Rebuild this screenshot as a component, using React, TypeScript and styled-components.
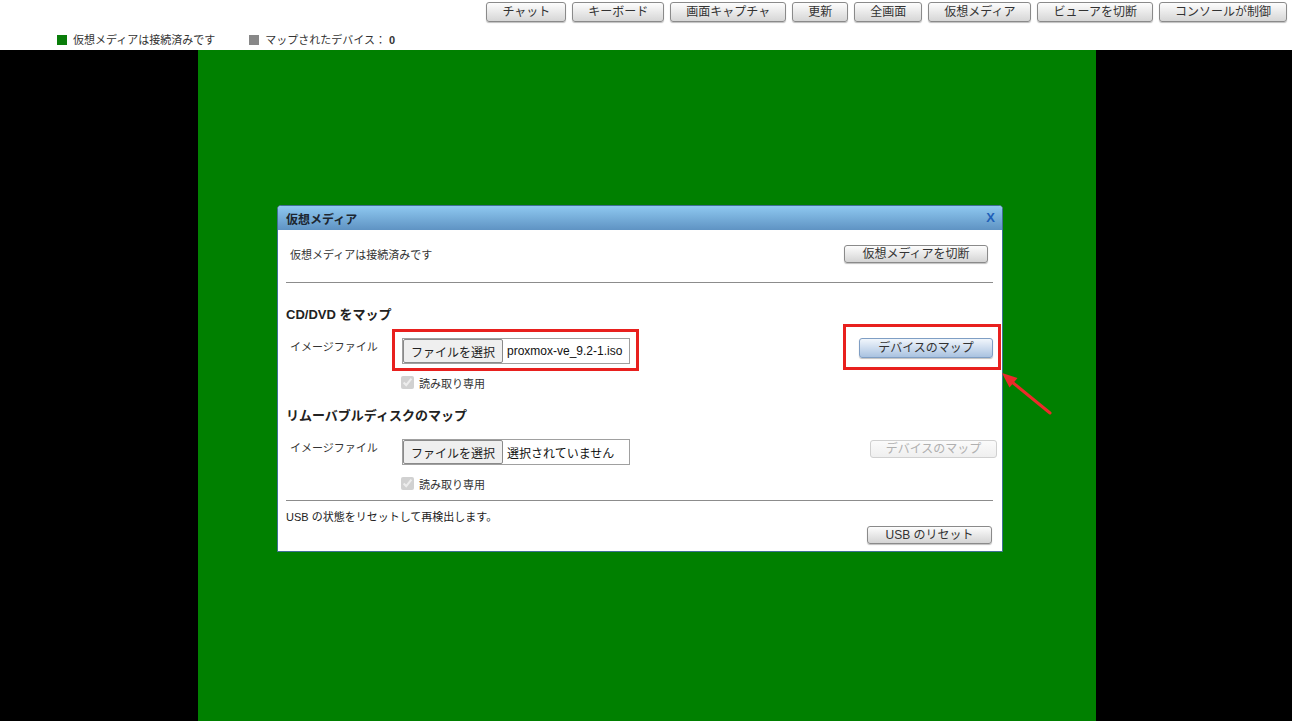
import styled, { createGlobalStyle } from "styled-components";

const GlobalStyle = createGlobalStyle`
  html, body, #root {
    margin: 0;
    padding: 0;
    height: 100%;
  }
  body {
    font-family: "Liberation Sans", "Noto Sans CJK JP", sans-serif;
    color: #333;
    background: #000;
  }
`;

const toolbarItems = [
  "チャット",
  "キーボード",
  "画面キャプチャ",
  "更新",
  "全画面",
  "仮想メディア",
  "ビューアを切断",
  "コンソールが制御",
];

const App = () => {
  return (
    <>
      <GlobalStyle />
      <Page>
        <TopBar>
          <Toolbar>
            {toolbarItems.map((label) => (
              <ToolBtn key={label}>{label}</ToolBtn>
            ))}
          </Toolbar>
          <StatusRow>
            <StatusItem>
              <Square $color="#0a7d0a" />
              仮想メディアは接続済みです
            </StatusItem>
            <StatusItem>
              <Square $color="#888" />
              マップされたデバイス： <Count>0</Count>
            </StatusItem>
          </StatusRow>
        </TopBar>

        <Main>
          <Screen>
            <Dialog>
              <DialogHeader>
                <DialogTitle>仮想メディア</DialogTitle>
                <CloseX>X</CloseX>
              </DialogHeader>
              <DialogBody>
                <TopRow>
                  <BodyText>仮想メディアは接続済みです</BodyText>
                  <GrayBtn $w={144}>仮想メディアを切断</GrayBtn>
                </TopRow>
                <Divider $top={4} />

                <Heading $top={24}>CD/DVD をマップ</Heading>
                <MapRow $top={15}>
                  <FieldLabel>イメージファイル</FieldLabel>
                  <Highlight $t={9} $r={9} $b={7} $l={10}>
                    <FileBox>
                      <FileBtn>ファイルを選択</FileBtn>
                      <FileName>proxmox-ve_9.2-1.iso</FileName>
                    </FileBox>
                  </Highlight>
                  <Push />
                  <Highlight $t={14} $r={8} $b={12} $l={16}>
                    <BlueBtn $w={134}>デバイスのマップ</BlueBtn>
                    <Arrow width="56" height="50" viewBox="0 0 56 50">
                      <line
                        x1="14"
                        y1="14"
                        x2="52"
                        y2="45"
                        stroke="#ec2a2a"
                        strokeWidth="3"
                        strokeLinecap="round"
                      />
                      <polygon points="4,5 11.5,19.5 19.5,10" fill="#ec2a2a" />
                    </Arrow>
                  </Highlight>
                </MapRow>
                <CheckRow>
                  <Check type="checkbox" checked disabled readOnly />
                  読み取り専用
                </CheckRow>

                <Heading $top={19}>リムーバブルディスクのマップ</Heading>
                <MapRow $top={15}>
                  <FieldLabel>イメージファイル</FieldLabel>
                  <FileBox>
                    <FileBtn>ファイルを選択</FileBtn>
                    <FileName>選択されていません</FileName>
                  </FileBox>
                  <Push />
                  <DisabledBtn $w={127}>デバイスのマップ</DisabledBtn>
                </MapRow>
                <CheckRow>
                  <Check type="checkbox" checked disabled readOnly />
                  読み取り専用
                </CheckRow>
                <Divider $top={10} />

                <Note>USB の状態をリセットして再検出します。</Note>
                <ResetRow>
                  <GrayBtn $w={125}>USB のリセット</GrayBtn>
                </ResetRow>
              </DialogBody>
            </Dialog>
          </Screen>
        </Main>
      </Page>
    </>
  );
};

const Page = styled.div`
  display: flex;
  flex-direction: column;
  height: 100vh;
`;

const TopBar = styled.div`
  height: 50px;
  flex-shrink: 0;
  background: #fff;
`;

const Toolbar = styled.div`
  display: flex;
  justify-content: flex-end;
  gap: 6px;
  padding: 2px 5px 0 0;
`;

const baseBtn = `
  box-sizing: border-box;
  display: inline-flex;
  align-items: center;
  justify-content: center;
  font-family: "Liberation Sans", "Noto Sans CJK JP", sans-serif;
  font-size: 12px;
  line-height: 1;
  border-radius: 3px;
  white-space: nowrap;
`;

const ToolBtn = styled.div`
  ${baseBtn}
  height: 20px;
  padding: 0 15px;
  color: #333;
  border: 1px solid #8a8a8a;
  background: linear-gradient(#fdfdfd, #d6d6d6);
  box-shadow: 0 1px 1px rgba(0, 0, 0, 0.25);
`;

const StatusRow = styled.div`
  display: flex;
  align-items: center;
  gap: 34px;
  height: 12px;
  margin-top: 12px;
  padding-left: 57px;
  font-size: 11px;
  color: #333;
`;

const StatusItem = styled.div`
  display: flex;
  align-items: center;
  gap: 6px;
  line-height: 12px;
`;

const Count = styled.b`
  margin-left: -3px;
  font-weight: 700;
`;

const Square = styled.span<{ $color: string }>`
  width: 10px;
  height: 10px;
  background: ${(p) => p.$color};
`;

const Main = styled.div`
  flex: 1;
  display: flex;
  padding-left: 198px;
  background: #000;
`;

const Screen = styled.div`
  box-sizing: border-box;
  width: 898px;
  padding: 155px 0 0 79px;
  background: #008000;
`;

const Dialog = styled.div`
  box-sizing: border-box;
  width: 726px;
  background: #fff;
  border: 1px solid #3f6f94;
  border-radius: 4px 4px 0 0;
`;

const DialogHeader = styled.div`
  display: flex;
  align-items: center;
  justify-content: space-between;
  height: 24px;
  padding: 0 7px 0 8px;
  border-radius: 3px 3px 0 0;
  background: linear-gradient(#8ec8f0, #5f93c3);
`;

const DialogTitle = styled.div`
  font-size: 12px;
  font-weight: 700;
  color: #1c2630;
`;

const CloseX = styled.div`
  font-size: 13px;
  font-weight: 700;
  color: #1f5fb8;
  margin-top: -2px;
`;

const DialogBody = styled.div`
  padding: 0 9px 7px 8px;
`;

const TopRow = styled.div`
  display: flex;
  align-items: center;
  justify-content: space-between;
  height: 48px;
  padding: 0 5px 0 4px;
`;

const BodyText = styled.div`
  font-size: 11px;
  color: #333;
`;

const GrayBtn = styled.div<{ $w: number }>`
  ${baseBtn}
  width: ${(p) => p.$w}px;
  height: 18px;
  color: #333;
  border: 1px solid #8a8a8a;
  background: linear-gradient(#fdfdfd, #d4d4d4);
  box-shadow: 0 1px 1px rgba(0, 0, 0, 0.25);
`;

const BlueBtn = styled.div<{ $w: number }>`
  ${baseBtn}
  width: ${(p) => p.$w}px;
  height: 20px;
  color: #333;
  border: 1px solid #7f9ec4;
  background: linear-gradient(#f1f6fc, #a9c2e0);
  box-shadow: 0 1px 1px rgba(0, 0, 0, 0.25);
`;

const DisabledBtn = styled.div<{ $w: number }>`
  ${baseBtn}
  width: ${(p) => p.$w}px;
  height: 18px;
  margin: 1px -4px 0 0;
  color: #b0b0b0;
  border: 1px solid #d0d0d0;
  background: linear-gradient(#fbfbfb, #efefef);
`;

const Divider = styled.div<{ $top: number }>`
  height: 1px;
  margin-top: ${(p) => p.$top}px;
  background: #8c8c8c;
`;

const Heading = styled.div<{ $top: number }>`
  margin-top: ${(p) => p.$top}px;
  font-size: 13px;
  font-weight: 700;
  line-height: 16px;
  color: #222;
`;

const MapRow = styled.div<{ $top: number }>`
  display: flex;
  align-items: flex-start;
  margin-top: ${(p) => p.$top}px;
`;

const FieldLabel = styled.div`
  box-sizing: border-box;
  width: 116px;
  padding: 1px 0 0 4px;
  font-size: 11px;
  line-height: 16px;
  color: #333;
`;

const Push = styled.div`
  flex: 1;
`;

const Highlight = styled.div<{ $t: number; $r: number; $b: number; $l: number }>`
  position: relative;
  display: flex;
  &::after {
    content: "";
    position: absolute;
    top: -${(p) => p.$t}px;
    right: -${(p) => p.$r}px;
    bottom: -${(p) => p.$b}px;
    left: -${(p) => p.$l}px;
    border: 3px solid #e8201e;
    pointer-events: none;
  }
`;

const Arrow = styled.svg`
  position: absolute;
  left: 139px;
  top: 30px;
`;

const FileBox = styled.div`
  box-sizing: border-box;
  display: flex;
  align-items: center;
  width: 228px;
  height: 26px;
  border: 1px solid #a0a0a0;
`;

const FileBtn = styled.div`
  box-sizing: border-box;
  display: flex;
  align-items: center;
  justify-content: center;
  width: 100px;
  height: 24px;
  font-size: 12px;
  color: #222;
  background: #efefef;
  border: 1px solid #8a8a8a;
  border-radius: 2px;
`;

const FileName = styled.div`
  padding-left: 4px;
  font-size: 12px;
  color: #111;
  white-space: nowrap;
`;

const CheckRow = styled.label`
  display: flex;
  align-items: center;
  gap: 5px;
  height: 13px;
  margin-top: 12px;
  padding-left: 115px;
  font-size: 11px;
  color: #333;
`;

const Check = styled.input`
  width: 13px;
  height: 13px;
  margin: 0;
`;

const Note = styled.div`
  margin-top: 8px;
  font-size: 11px;
  line-height: 16px;
  color: #222;
`;

const ResetRow = styled.div`
  display: flex;
  justify-content: flex-end;
  margin-top: 1px;
  padding-right: 1px;
`;

export default App;
